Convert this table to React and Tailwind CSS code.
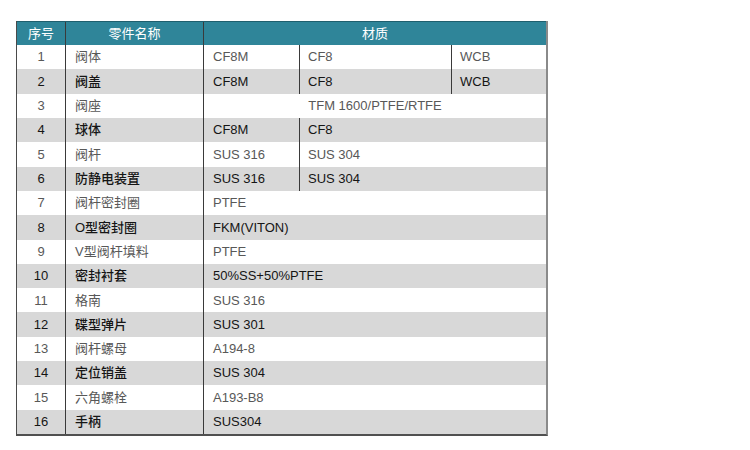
const ROWS = [
  { no: '1', name: '阀体', mats: ['CF8M', 'CF8', 'WCB'] },
  { no: '2', name: '阀盖', mats: ['CF8M', 'CF8', 'WCB'] },
  { no: '3', name: '阀座', span: 'TFM 1600/PTFE/RTFE', center: true },
  { no: '4', name: '球体', mats: ['CF8M', 'CF8'] },
  { no: '5', name: '阀杆', mats: ['SUS 316', 'SUS 304'] },
  { no: '6', name: '防静电装置', mats: ['SUS 316', 'SUS 304'] },
  { no: '7', name: '阀杆密封圈', span: 'PTFE' },
  { no: '8', name: 'O型密封圈', span: 'FKM(VITON)' },
  { no: '9', name: 'V型阀杆填料', span: 'PTFE' },
  { no: '10', name: '密封衬套', span: '50%SS+50%PTFE' },
  { no: '11', name: '格南', span: 'SUS 316' },
  { no: '12', name: '碟型弹片', span: 'SUS 301' },
  { no: '13', name: '阀杆螺母', span: 'A194-8' },
  { no: '14', name: '定位销盖', span: 'SUS 304' },
  { no: '15', name: '六角螺栓', span: 'A193-B8' },
  { no: '16', name: '手柄', span: 'SUS304' },
]

const font = "font-['Liberation_Sans','Noto_Sans_CJK_SC',sans-serif]"
const line = 'border-r border-[#3a3a3a]'

function MaterialCells({ row }) {
  if (row.span) {
    return (
      <div className={`flex-1 flex items-center ${row.center ? 'justify-center' : 'pl-[9px]'}`}>
        {row.span}
      </div>
    )
  }
  if (row.mats.length === 2) {
    return (
      <>
        <div className={`w-[96px] flex items-center pl-[9px] ${line}`}>{row.mats[0]}</div>
        <div className="flex-1 flex items-center pl-[8px]">{row.mats[1]}</div>
      </>
    )
  }
  return (
    <>
      <div className={`w-[96px] flex items-center pl-[9px] ${line}`}>{row.mats[0]}</div>
      <div className={`w-[152px] flex items-center pl-[8px] ${line}`}>{row.mats[1]}</div>
      <div className="flex-1 flex items-center pl-[8px]">{row.mats[2]}</div>
    </>
  )
}

export default function App() {
  return (
    <div className={`w-[750px] h-[450px] bg-white ${font} text-[13px]`}>
      <div className="pt-[21px] pl-[16px]">
        <div className="w-[532px] h-[415px] flex flex-col border-l border-l-[#4a4a4a] border-r-2 border-r-[#8a8a8a] border-b-2 border-b-[#505050]">
          <div className="h-[24px] flex bg-[#2f8599] border-t border-t-[#1f5f6e] text-white text-[13px]">
            <div className={`w-[49px] flex items-center justify-center ${line}`}>序号</div>
            <div className={`w-[138px] flex items-center justify-center ${line}`}>零件名称</div>
            <div className="flex-1 flex items-center justify-center">材质</div>
          </div>
          {ROWS.map((row, i) => {
            const even = i % 2 === 1
            return (
              <div
                key={row.no}
                className={`flex-1 flex ${even ? 'bg-[#d8d8d8] text-[#151515]' : 'bg-white text-[#585858]'}`}
              >
                <div className={`w-[49px] flex items-center justify-center ${line}`}>{row.no}</div>
                <div className={`w-[138px] flex items-center pl-[9px] ${line} ${even ? 'font-medium' : ''}`}>
                  {row.name}
                </div>
                <MaterialCells row={row} />
              </div>
            )
          })}
        </div>
      </div>
    </div>
  )
}
